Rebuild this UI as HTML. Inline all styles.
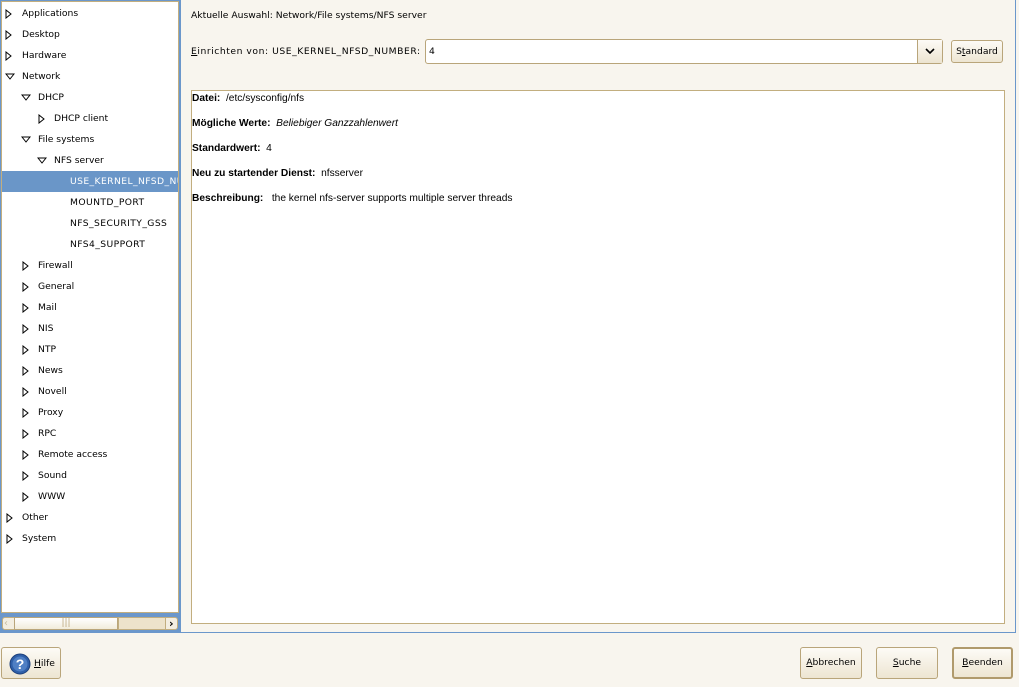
<!DOCTYPE html>
<html><head><meta charset="utf-8"><style>
body{margin:0;width:1019px;height:687px;background:#f8f5ee;font-family:"DejaVu Sans","Liberation Sans",sans-serif;font-size:9.2px;color:#000;position:relative;overflow:hidden}
.abs{position:absolute}
#tree{background:#fff;border:1px solid #c2ae7f;outline:1px solid #6b97cb;box-sizing:border-box}
.row{position:absolute;left:0;width:176px;height:21px;line-height:21px;white-space:nowrap;overflow:hidden}
.row svg{position:absolute;top:6px}
.sel{background:#6a96c8;color:#fff}
.btn{position:absolute;border:1px solid #b9a57a;border-radius:3px;background:linear-gradient(#fdfbf6,#ede5d2);text-align:center;box-sizing:border-box}
u{text-decoration:underline}
</style></head><body>
<div class="abs" style="left:180px;top:0;width:1px;height:633px;background:#6b97cb"></div>
<div class="abs" style="left:1015px;top:0;width:1px;height:633px;background:#6b97cb"></div>
<div class="abs" style="left:0;top:632px;width:1016px;height:1px;background:#6b97cb"></div>
<div class="abs" id="tree" style="left:1px;top:1px;width:178px;height:612px">
<div class="row" style="top:1px"><svg width="8" height="10" style="left:3px"><path d="M1 1L6 5L1 9Z" fill="none" stroke="#000"/></svg><span style="position:absolute;left:20px">Applications</span></div>
<div class="row" style="top:22px"><svg width="8" height="10" style="left:3px"><path d="M1 1L6 5L1 9Z" fill="none" stroke="#000"/></svg><span style="position:absolute;left:20px">Desktop</span></div>
<div class="row" style="top:43px"><svg width="8" height="10" style="left:3px"><path d="M1 1L6 5L1 9Z" fill="none" stroke="#000"/></svg><span style="position:absolute;left:20px">Hardware</span></div>
<div class="row" style="top:64px"><svg width="10" height="8" style="left:3px;top:7px"><path d="M1 1L9 1L5 6Z" fill="none" stroke="#000"/></svg><span style="position:absolute;left:20px">Network</span></div>
<div class="row" style="top:85px"><svg width="10" height="8" style="left:19px;top:7px"><path d="M1 1L9 1L5 6Z" fill="none" stroke="#000"/></svg><span style="position:absolute;left:36px">DHCP</span></div>
<div class="row" style="top:106px"><svg width="8" height="10" style="left:36px"><path d="M1 1L6 5L1 9Z" fill="none" stroke="#000"/></svg><span style="position:absolute;left:52px">DHCP client</span></div>
<div class="row" style="top:127px"><svg width="10" height="8" style="left:19px;top:7px"><path d="M1 1L9 1L5 6Z" fill="none" stroke="#000"/></svg><span style="position:absolute;left:36px">File systems</span></div>
<div class="row" style="top:148px"><svg width="10" height="8" style="left:35px;top:7px"><path d="M1 1L9 1L5 6Z" fill="none" stroke="#000"/></svg><span style="position:absolute;left:52px">NFS server</span></div>
<div class="row sel" style="top:169px"><span style="position:absolute;left:68px;letter-spacing:0.4px">USE_KERNEL_NFSD_NUMBER</span></div>
<div class="row" style="top:190px"><span style="position:absolute;left:68px;letter-spacing:0.4px">MOUNTD_PORT</span></div>
<div class="row" style="top:211px"><span style="position:absolute;left:68px;letter-spacing:0.4px">NFS_SECURITY_GSS</span></div>
<div class="row" style="top:232px"><span style="position:absolute;left:68px;letter-spacing:0.4px">NFS4_SUPPORT</span></div>
<div class="row" style="top:253px"><svg width="8" height="10" style="left:20px"><path d="M1 1L6 5L1 9Z" fill="none" stroke="#000"/></svg><span style="position:absolute;left:36px">Firewall</span></div>
<div class="row" style="top:274px"><svg width="8" height="10" style="left:20px"><path d="M1 1L6 5L1 9Z" fill="none" stroke="#000"/></svg><span style="position:absolute;left:36px">General</span></div>
<div class="row" style="top:295px"><svg width="8" height="10" style="left:20px"><path d="M1 1L6 5L1 9Z" fill="none" stroke="#000"/></svg><span style="position:absolute;left:36px">Mail</span></div>
<div class="row" style="top:316px"><svg width="8" height="10" style="left:20px"><path d="M1 1L6 5L1 9Z" fill="none" stroke="#000"/></svg><span style="position:absolute;left:36px">NIS</span></div>
<div class="row" style="top:337px"><svg width="8" height="10" style="left:20px"><path d="M1 1L6 5L1 9Z" fill="none" stroke="#000"/></svg><span style="position:absolute;left:36px">NTP</span></div>
<div class="row" style="top:358px"><svg width="8" height="10" style="left:20px"><path d="M1 1L6 5L1 9Z" fill="none" stroke="#000"/></svg><span style="position:absolute;left:36px">News</span></div>
<div class="row" style="top:379px"><svg width="8" height="10" style="left:20px"><path d="M1 1L6 5L1 9Z" fill="none" stroke="#000"/></svg><span style="position:absolute;left:36px">Novell</span></div>
<div class="row" style="top:400px"><svg width="8" height="10" style="left:20px"><path d="M1 1L6 5L1 9Z" fill="none" stroke="#000"/></svg><span style="position:absolute;left:36px">Proxy</span></div>
<div class="row" style="top:421px"><svg width="8" height="10" style="left:20px"><path d="M1 1L6 5L1 9Z" fill="none" stroke="#000"/></svg><span style="position:absolute;left:36px">RPC</span></div>
<div class="row" style="top:442px"><svg width="8" height="10" style="left:20px"><path d="M1 1L6 5L1 9Z" fill="none" stroke="#000"/></svg><span style="position:absolute;left:36px">Remote access</span></div>
<div class="row" style="top:463px"><svg width="8" height="10" style="left:20px"><path d="M1 1L6 5L1 9Z" fill="none" stroke="#000"/></svg><span style="position:absolute;left:36px">Sound</span></div>
<div class="row" style="top:484px"><svg width="8" height="10" style="left:20px"><path d="M1 1L6 5L1 9Z" fill="none" stroke="#000"/></svg><span style="position:absolute;left:36px">WWW</span></div>
<div class="row" style="top:505px"><svg width="8" height="10" style="left:4px"><path d="M1 1L6 5L1 9Z" fill="none" stroke="#000"/></svg><span style="position:absolute;left:20px">Other</span></div>
<div class="row" style="top:526px"><svg width="8" height="10" style="left:4px"><path d="M1 1L6 5L1 9Z" fill="none" stroke="#000"/></svg><span style="position:absolute;left:20px">System</span></div>
</div>
<!-- scrollbar -->
<div class="abs" style="left:0;top:614px;width:180px;height:18px;background:#6b97cb"></div>
<div class="abs" style="left:2px;top:617px;width:176px;height:13px;background:#f3eee1;border:1px solid #c2ae7f;border-radius:3px;box-sizing:border-box"></div>
<div class="abs" style="left:14px;top:617px;width:104px;height:13px;background:linear-gradient(#fff,#f1ebda);border:1px solid #b9a57a;box-sizing:border-box;text-align:center;font-size:9px;line-height:11px;color:#bba77d">|||</div>
<div class="abs" style="left:118px;top:617px;width:48px;height:13px;background:#ede3cb;border:1px solid #c2ae7f;box-sizing:border-box"></div>
<div class="abs" style="left:4px;top:618px;font-size:10px;color:#c8bda0">‹</div>
<div class="abs" style="left:169px;top:617px;font-size:11px;font-weight:bold">›</div>

<div class="abs" style="left:191px;top:10px">Aktuelle Auswahl: Network/File systems/NFS server</div>
<div class="abs" style="left:191px;top:46px;letter-spacing:0.55px"><u>E</u>inrichten von: USE_KERNEL_NFSD_NUMBER:</div>
<div class="abs" style="left:425px;top:39px;width:518px;height:25px;background:#fff;border:1px solid #b9a57a;border-radius:3px;box-sizing:border-box"><span style="position:absolute;left:3px;top:6px">4</span>
<div style="position:absolute;right:0;top:0;width:24px;height:23px;border-left:1px solid #b9a57a;background:linear-gradient(#fdfbf6,#ece4d0)"><svg width="24" height="23"><path d="M8 9L12 13L16 9" fill="none" stroke="#000" stroke-width="1.6"/></svg></div></div>
<div class="btn" style="left:951px;top:40px;width:52px;height:23px;line-height:21px">S<u>t</u>andard</div>

<div class="abs" style="left:191px;top:90px;width:814px;height:534px;background:#fff;border:1px solid #c2ae7f;box-sizing:border-box;font-family:'Liberation Sans',sans-serif;font-size:10.2px">
<div style="position:absolute;left:0px;top:2px"><b>Datei:</b>&nbsp; /etc/sysconfig/nfs</div>
<div style="position:absolute;left:0px;top:27px"><b>Mögliche Werte:</b>&nbsp; <i>Beliebiger Ganzzahlenwert</i></div>
<div style="position:absolute;left:0px;top:52px"><b>Standardwert:</b>&nbsp; 4</div>
<div style="position:absolute;left:0px;top:77px"><b>Neu zu startender Dienst:</b>&nbsp; nfsserver</div>
<div style="position:absolute;left:0px;top:102px"><b>Beschreibung:</b>&nbsp;&nbsp; the kernel nfs-server supports multiple server threads</div>
</div>

<div class="btn" style="left:1px;top:647px;width:60px;height:32px">
<svg width="22" height="22" style="position:absolute;left:7px;top:5px"><circle cx="11" cy="11" r="10" fill="#2f5fa8" stroke="#1d3f7a"/><circle cx="11" cy="11" r="7.5" fill="#4f7fc4"/><text x="11" y="16" text-anchor="middle" font-size="14" font-weight="bold" fill="#fff" font-family="Liberation Sans,sans-serif">?</text></svg>
<span style="position:absolute;left:32px;top:10px"><u>H</u>ilfe</span></div>
<div class="btn" style="left:800px;top:647px;width:62px;height:32px;line-height:30px"><u>A</u>bbrechen</div>
<div class="btn" style="left:876px;top:647px;width:62px;height:32px;line-height:30px"><u>S</u>uche</div>
<div class="btn" style="left:952px;top:647px;width:61px;height:32px;line-height:28px;border:2px solid #b09a6c"><u>B</u>eenden</div>
</body></html>
